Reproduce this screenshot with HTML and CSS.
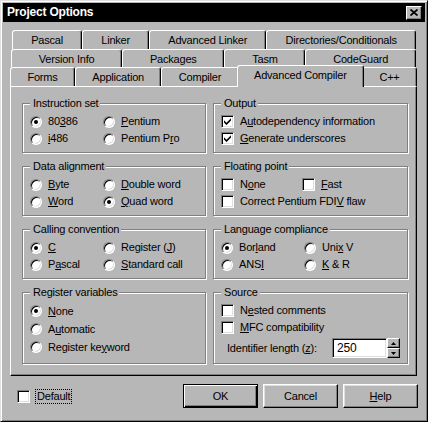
FILE: index.html
```html
<!DOCTYPE html>
<html lang="en">
<head>
<meta charset="UTF-8">
<title>Project Options</title>
<link rel="stylesheet" href="styles.css">
</head>
<body>
    <div class="window">
        <div class="titlebar">
            <span class="title">Project Options</span>
            <button class="close"><svg width="8" height="7" viewBox="0 0 8 7"><path d="M0.5 0.5 L7.5 6.5 M7.5 0.5 L0.5 6.5" stroke="#000" stroke-width="1.7"/></svg></button>
        </div>

        <div class="sheet">
            <div class="tabrow row1">
                <div class="tab">Pascal</div>
                <div class="tab">Linker</div>
                <div class="tab">Advanced Linker</div>
                <div class="tab">Directories/Conditionals</div>
            </div>
            <div class="tabrow row2">
                <div class="tab">Version Info</div>
                <div class="tab">Packages</div>
                <div class="tab">Tasm</div>
                <div class="tab">CodeGuard</div>
            </div>
            <div class="tabrow row3">
                <div class="tab">Forms</div>
                <div class="tab">Application</div>
                <div class="tab">Compiler</div>
                <div class="tab active">Advanced Compiler</div>
                <div class="tab">C++</div>
            </div>

            <div class="panel">
                <fieldset class="group">
                    <legend>Instruction set</legend>
                    <div class="opts">
                        <label class="opt"><span class="radio on"></span><span>80<u>3</u>86</span></label>
                        <label class="opt"><span class="radio"></span><span><u>P</u>entium</span></label>
                        <label class="opt"><span class="radio"></span><span><u>i</u>486</span></label>
                        <label class="opt"><span class="radio"></span><span>Pentium P<u>r</u>o</span></label>
                    </div>
                </fieldset>
                <fieldset class="group">
                    <legend>Output</legend>
                    <div class="opts single">
                        <label class="opt"><span class="check"><svg width="7" height="7" viewBox="0 0 7 7"><path d="M0 2.2 L2.5 4.7 L7 0.2 L7 2.6 L2.5 7.1 L0 4.6 Z" fill="#000"/></svg></span><span>A<u>u</u>todependency information</span></label>
                        <label class="opt"><span class="check"><svg width="7" height="7" viewBox="0 0 7 7"><path d="M0 2.2 L2.5 4.7 L7 0.2 L7 2.6 L2.5 7.1 L0 4.6 Z" fill="#000"/></svg></span><span><u>G</u>enerate underscores</span></label>
                    </div>
                </fieldset>

                <fieldset class="group">
                    <legend>Data alignment</legend>
                    <div class="opts">
                        <label class="opt"><span class="radio"></span><span><u>B</u>yte</span></label>
                        <label class="opt"><span class="radio"></span><span><u>D</u>ouble word</span></label>
                        <label class="opt"><span class="radio"></span><span><u>W</u>ord</span></label>
                        <label class="opt"><span class="radio on"></span><span><u>Q</u>uad word</span></label>
                    </div>
                </fieldset>
                <fieldset class="group">
                    <legend>Floating point</legend>
                    <div class="opts wide">
                        <label class="opt"><span class="check"></span><span>N<u>o</u>ne</span></label>
                        <label class="opt"><span class="check"></span><span><u>F</u>ast</span></label>
                        <label class="opt span2"><span class="check"></span><span>Correct Pentium FDI<u>V</u> flaw</span></label>
                    </div>
                </fieldset>

                <fieldset class="group">
                    <legend>Calling convention</legend>
                    <div class="opts">
                        <label class="opt"><span class="radio on"></span><span><u>C</u></span></label>
                        <label class="opt"><span class="radio"></span><span>Register (<u>J</u>)</span></label>
                        <label class="opt"><span class="radio"></span><span>P<u>a</u>scal</span></label>
                        <label class="opt"><span class="radio"></span><span><u>S</u>tandard call</span></label>
                    </div>
                </fieldset>
                <fieldset class="group">
                    <legend>Language compliance</legend>
                    <div class="opts wider">
                        <label class="opt"><span class="radio on"></span><span>Bor<u>l</u>and</span></label>
                        <label class="opt"><span class="radio"></span><span>Uni<u>x</u> V</span></label>
                        <label class="opt"><span class="radio"></span><span>ANS<u>I</u></span></label>
                        <label class="opt"><span class="radio"></span><span><u>K</u> &amp; R</span></label>
                    </div>
                </fieldset>

                <fieldset class="group">
                    <legend>Register variables</legend>
                    <div class="opts single tall">
                        <label class="opt"><span class="radio on"></span><span><u>N</u>one</span></label>
                        <label class="opt"><span class="radio"></span><span>A<u>u</u>tomatic</span></label>
                        <label class="opt"><span class="radio"></span><span>Register ke<u>y</u>word</span></label>
                    </div>
                </fieldset>
                <fieldset class="group">
                    <legend>Source</legend>
                    <div class="opts single">
                        <label class="opt"><span class="check"></span><span>N<u>e</u>sted comments</span></label>
                        <label class="opt"><span class="check"></span><span><u>M</u>FC compatibility</span></label>
                    </div>
                    <div class="field">
                        <span class="field-label">Identifier length (<u>z</u>):</span>
                        <div class="spinedit">
                            <div class="edit">250</div>
                            <div class="spinbtns">
                                <span class="sbtn"><svg width="5" height="3" viewBox="0 0 5 3"><path d="M2.5 0 L5 3 L0 3 Z" fill="#000"/></svg></span>
                                <span class="sbtn"><svg width="5" height="3" viewBox="0 0 5 3"><path d="M0 0 L5 0 L2.5 3 Z" fill="#000"/></svg></span>
                            </div>
                        </div>
                    </div>
                </fieldset>
            </div>
        </div>

        <div class="footer">
            <label class="opt"><span class="check"></span><span class="focus">Default</span></label>
            <div class="buttons">
                <button class="btn default">OK</button>
                <button class="btn">Cancel</button>
                <button class="btn"><u>H</u>elp</button>
            </div>
        </div>
    </div>
</body>
</html>
```

FILE: styles.css
```css
body {
    margin: 0;
    background: #fff;
    font-family: "Liberation Sans", Arial, sans-serif;
    font-size: 11px;
    line-height: 13px;
    letter-spacing: -0.2px;
    color: #000;
}
.window {
    box-sizing: border-box;
    width: 428px;
    height: 422px;
    padding: 2px;
    background: #b7b7b7;
    border: 1px solid;
    border-color: #dfdfdf #000 #000 #dfdfdf;
    box-shadow: inset 1px 1px 0 #fff, inset -1px -1px 0 #808080;
    display: flex;
    flex-direction: column;
}
.titlebar {
    height: 19px;
    background: #000;
    color: #fff;
    display: flex;
    align-items: center;
    padding: 0 3px 0 4px;
}
.title {
    font-weight: bold;
    font-size: 12px;
}
.close {
    margin-left: auto;
    width: 16px;
    height: 14px;
    padding: 0;
    background: #b7b7b7;
    border: 1px solid;
    border-color: #fff #000 #000 #fff;
    box-shadow: inset -1px -1px 0 #808080;
    display: flex;
    align-items: center;
    justify-content: center;
}

/* tabs */
.sheet {
    padding: 8px 8px 0 7px;
}
.tabrow {
    display: flex;
}
.row1 {
    height: 19px;
    padding: 0 1px 0 2px;
}
.row2 {
    height: 18px;
    padding: 0 1px;
}
.row3 {
    height: 19px;
}
.tab {
    flex: 1 1 auto;
    display: flex;
    align-items: center;
    justify-content: center;
    white-space: nowrap;
    background: #b7b7b7;
    border: 1px solid;
    border-bottom: 0;
    border-color: #fff #000 #000 #fff;
    border-radius: 3px 3px 0 0;
    box-shadow: inset -1px 0 0 #808080;
    padding-top: 1px;
}
.tab.active {
    position: relative;
    z-index: 1;
    margin: -2px -2px -1px;
    padding-top: 0;
    padding-bottom: 2px;
}

.panel {
    border: 1px solid;
    border-color: #fff #000 #000 #fff;
    box-shadow: inset -1px -1px 0 #808080;
    padding: 10px 9px 11px 11px;
    display: grid;
    grid-template-columns: 184px 195px;
    column-gap: 7px;
    row-gap: 7px;
}

/* group boxes */
.group {
    margin: 0;
    min-width: 0;
    padding: 3px 7px 5px 7px;
    border: 1px solid #808080;
    box-shadow: inset 1px 1px 0 #fff, 1px 1px 0 #fff;
}
.group legend {
    padding: 0 2px 0 3px;
    background: #b7b7b7;
    line-height: 13px;
}
.opts {
    display: grid;
    grid-template-columns: 73px auto;
    grid-auto-rows: 17px;
}
.opts.wide {
    grid-template-columns: 81px auto;
}
.opts.wider {
    grid-template-columns: 83px auto;
}
.opts.single {
    grid-template-columns: auto;
}
.opts.tall {
    grid-auto-rows: 18px;
}
.span2 {
    grid-column: span 2;
}
.opt {
    display: flex;
    align-items: center;
    gap: 6px;
    white-space: nowrap;
}

/* radios and checkboxes */
.radio {
    box-sizing: border-box;
    flex: none;
    width: 12px;
    height: 12px;
    border-radius: 50%;
    background: #fff;
    border: 1px solid;
    border-color: #808080 #fff #fff #808080;
    box-shadow: inset 1px 1px 0 #000, inset -1px -1px 0 #dfdfdf;
    display: flex;
    align-items: center;
    justify-content: center;
}
.radio.on::after {
    content: "";
    width: 4px;
    height: 4px;
    border-radius: 50%;
    background: #000;
}
.check {
    box-sizing: border-box;
    flex: none;
    width: 13px;
    height: 13px;
    background: #fff;
    border: 1px solid;
    border-color: #808080 #fff #fff #808080;
    box-shadow: inset 1px 1px 0 #000, inset -1px -1px 0 #dfdfdf;
    display: flex;
    align-items: center;
    justify-content: center;
}
.check svg {
    display: block;
}

/* identifier length */
.field {
    display: flex;
    align-items: center;
    height: 20px;
    margin-top: 2px;
}
.field-label {
    padding-left: 6px;
}
.spinedit {
    margin-left: auto;
    display: flex;
}
.edit {
    box-sizing: border-box;
    width: 55px;
    height: 20px;
    padding-left: 4px;
    background: #fff;
    border: 1px solid;
    border-color: #808080 #fff #fff #808080;
    box-shadow: inset 1px 1px 0 #000, inset -1px -1px 0 #dfdfdf;
    display: flex;
    align-items: center;
    font-size: 12px;
}
.spinbtns {
    display: flex;
    flex-direction: column;
}
.sbtn {
    box-sizing: border-box;
    width: 13px;
    height: 10px;
    border: 1px solid;
    border-color: #fff #000 #000 #fff;
    box-shadow: inset -1px -1px 0 #808080;
    display: flex;
    align-items: center;
    justify-content: center;
}
.sbtn svg {
    display: block;
}

/* footer */
.footer {
    display: flex;
    align-items: center;
    padding: 8px 7px 0 14px;
}
.focus {
    outline: 1px dotted #000;
    padding: 0 1px;
}
.buttons {
    margin-left: auto;
    display: flex;
    gap: 5px;
}
.btn {
    box-sizing: border-box;
    width: 75px;
    height: 24px;
    padding: 0;
    background: #b7b7b7;
    font-family: "Liberation Sans", Arial, sans-serif;
    font-size: 11px;
    letter-spacing: -0.2px;
    color: #000;
    border: 1px solid;
    border-color: #fff #000 #000 #fff;
    box-shadow: inset -1px -1px 0 #808080, inset 1px 1px 0 #dfdfdf;
}
.btn.default {
    border-color: #000;
    box-shadow: inset 1px 1px 0 #fff, inset -1px -1px 0 #000, inset -2px -2px 0 #808080;
}
```
